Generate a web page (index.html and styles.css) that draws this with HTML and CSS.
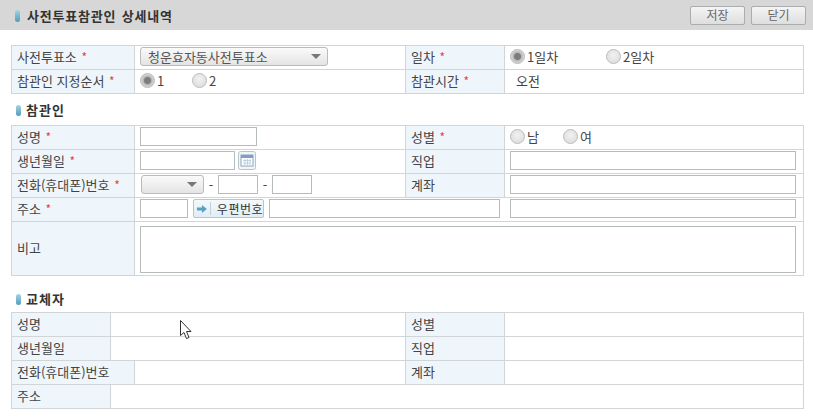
FILE: index.html
```html
<!DOCTYPE html>
<html lang="ko">
<head>
<meta charset="utf-8">
<title>사전투표참관인 상세내역</title>
<link rel="stylesheet" href="styles.css">
</head>
<body>
<header class="top">
  <h1 class="title"><span class="pill"></span>사전투표참관인 상세내역</h1>
  <div class="actions">
    <button class="btn" type="button">저장</button>
    <button class="btn" type="button">닫기</button>
  </div>
</header>

<table class="grid first">
  <colgroup><col class="c1"><col class="c2"><col class="c3"><col class="c4"><col class="c5"></colgroup>
  <tr>
    <th colspan="2">사전투표소 <em>*</em></th>
    <td><div class="ctl"><span class="select wide">청운효자동사전투표소<i class="arrow"></i></span></div></td>
    <th>일차 <em>*</em></th>
    <td><div class="ctl"><label class="opt day"><span class="radio on"></span>1일차</label><label class="opt"><span class="radio"></span>2일차</label></div></td>
  </tr>
  <tr>
    <th colspan="2">참관인 지정순서 <em>*</em></th>
    <td><div class="ctl"><label class="opt order"><span class="radio on"></span>1</label><label class="opt"><span class="radio"></span>2</label></div></td>
    <th>참관시간 <em>*</em></th>
    <td class="plain">오전</td>
  </tr>
</table>

<h2 class="section one"><span class="pill small"></span>참관인</h2>
<table class="grid">
  <colgroup><col class="c1"><col class="c2"><col class="c3"><col class="c4"><col class="c5"></colgroup>
  <tr>
    <th colspan="2">성명 <em>*</em></th>
    <td><div class="ctl"><span class="field name"></span></div></td>
    <th>성별 <em>*</em></th>
    <td><div class="ctl"><label class="opt male"><span class="radio"></span>남</label><label class="opt"><span class="radio"></span>여</label></div></td>
  </tr>
  <tr>
    <th colspan="2">생년월일 <em>*</em></th>
    <td><div class="ctl"><span class="field date"></span>
      <svg class="cal" width="18" height="19" viewBox="0 0 18 19"><rect x=".5" y=".5" width="17" height="18" rx="2" fill="#f2f5f8" stroke="#b9c3cc"/><rect x="3" y="4" width="12" height="11" fill="#fff" stroke="#8aa5c4"/><rect x="3" y="4" width="12" height="3" fill="#7f9fc6"/><path d="M5 9.500h8M5 12h8M7 8v6M9.500 8v6M12 8v6" stroke="#c3d0de"/></svg>
    </div></td>
    <th>직업</th>
    <td><div class="ctl"><span class="field full"></span></div></td>
  </tr>
  <tr>
    <th colspan="2">전화(휴대폰)번호 <em>*</em></th>
    <td><div class="ctl"><span class="select phone"><i class="arrow"></i></span><span class="dash">-</span><span class="field tel"></span><span class="dash">-</span><span class="field tel"></span></div></td>
    <th>계좌</th>
    <td><div class="ctl"><span class="field full"></span></div></td>
  </tr>
  <tr>
    <th colspan="2">주소 <em>*</em></th>
    <td colspan="3"><div class="ctl"><span class="field zip"></span>
      <button class="zipbtn" type="button"><svg width="12" height="10" viewBox="0 0 12 10"><path d="M1 3.500h5V1l5 4-5 4V6.500H1z" fill="#5c9fc4"/></svg><span class="sep"></span>우편번호</button>
      <span class="field addr"></span><span class="field full"></span></div></td>
  </tr>
  <tr class="tall">
    <th colspan="2">비고</th>
    <td colspan="3" class="notecell"><span class="field note"></span></td>
  </tr>
</table>

<h2 class="section two"><span class="pill small"></span>교체자</h2>
<table class="grid">
  <colgroup><col class="c1"><col class="c2"><col class="c3"><col class="c4"><col class="c5"></colgroup>
  <tr><th>성명</th><td colspan="2"></td><th>성별</th><td></td></tr>
  <tr><th>생년월일</th><td colspan="2"></td><th>직업</th><td></td></tr>
  <tr><th colspan="2">전화(휴대폰)번호</th><td></td><th>계좌</th><td></td></tr>
  <tr><th>주소</th><td colspan="4"></td></tr>
</table>

<svg class="cursor" width="13" height="20" viewBox="0 0 13 20"><path d="M.5.500v15l3.500-3 2.500 6 2.500-1-2.500-6h4.500z" fill="#fff" stroke="#333"/></svg>
</body>
</html>
```
FILE: styles.css
```css
* { box-sizing: border-box; }
html, body { margin: 0; padding: 0; }
body {
  position: relative;
  width: 813px;
  height: 420px;
  overflow: hidden;
  background: #fff;
  color: #444;
  font: 13px/18px "Noto Sans CJK KR", "Noto Sans", sans-serif;
}
.top {
  height: 30px;
  background: #d7d7d7;
  display: flex;
  align-items: center;
  justify-content: space-between;
  padding: 0 7px 0 15px;
}
.title, .section {
  margin: 0;
  display: flex;
  align-items: center;
  font-size: 13px;
  font-weight: 700;
  color: #333;
}
.title { letter-spacing: .8px; word-spacing: 1px; padding-top: 2px; }
.section { letter-spacing: 1px; }
.pill {
  display: block;
  width: 5px;
  height: 12px;
  margin-right: 7px;
  border-radius: 3px;
  background: linear-gradient(#a8d2e2, #4f9cc0);
}
.pill.small { margin-left: 1px; margin-right: 5px; width: 5px; height: 11px; }
.actions { display: flex; gap: 6px; }
.btn {
  width: 55px;
  height: 19px;
  padding: 0;
  border: 1px solid #a9adad;
  border-radius: 2px;
  background: linear-gradient(#f4f4f4, #dedede);
  color: #666;
  font: 12px/16px "Noto Sans CJK KR", sans-serif;
}
.grid {
  margin: 15px 0 0 11px;
  width: 792px;
  border-collapse: collapse;
  table-layout: fixed;
}
.c1 { width: 99px; }
.c2 { width: 24px; }
.c3 { width: 271px; }
.c4 { width: 99px; }
.c5 { width: 299px; }
.grid tr { height: 24px; }
.grid tr.tall { height: 54px; }
.grid th, .grid td {
  border: 1px solid #d2d5d7;
  padding: 0 0 2px 5px;
  font-weight: 400;
  text-align: left;
  white-space: nowrap;
  vertical-align: middle;
}
.grid th { background: #eff6fb; }
.grid em { color: #d9473f; font-style: normal; font-size: 12px; margin-left: 1px; }
.grid .plain { padding-left: 11px; }
.grid .notecell { padding: 4px 0 2px 5px; }
.ctl { display: flex; align-items: center; gap: 5px; height: 20px; }
.field {
  display: block;
  height: 19px;
  flex: none;
  border: 1px solid #b6bcbc;
  background: #fff;
}
.name { width: 117px; }
.date { width: 95px; }
.cal { flex: none; margin-left: -2px; }
.full { width: 286px; }
.tel { width: 40px; }
.zip { width: 48px; }
.addr { width: 231px; margin-right: 5px; }
.note { width: 656px; height: 47px; }
.select {
  position: relative;
  display: block;
  flex: none;
  height: 19px;
  padding-left: 7px;
  border: 1px solid #b8bcbc;
  border-radius: 3px;
  background: linear-gradient(#fafafa, #e4e4e4);
  color: #555;
  line-height: 17px;
}
.wide { width: 188px; }
.phone { width: 63px; margin-left: 1px; }
.arrow {
  position: absolute;
  right: 6px;
  top: 6px;
  border: 5px solid transparent;
  border-top: 5px solid #777;
  border-bottom: 0;
}
.dash { display: flex; justify-content: center; width: 4px; }
.opt { display: flex; align-items: center; gap: 2px; }
.radio {
  display: block;
  width: 15px;
  height: 15px;
  border: 1px solid #bdbdbd;
  border-radius: 50%;
  background: radial-gradient(circle at 50% 40%, #f2f2f2, #d8d8d8);
}
.radio.on { background: radial-gradient(circle, #7d7d7d 0 3px, #b5b5b5 4px, #d2d2d2 6px); }
.order { width: 47px; }
.day { width: 91px; }
.male { width: 48px; }
.zipbtn {
  display: flex;
  align-items: center;
  flex: none;
  width: 71px;
  height: 19px;
  padding: 0 0 0 2px;
  border: 1px solid #b5c6cf;
  border-radius: 2px;
  background: linear-gradient(#f3f9fc, #dfeef5);
  color: #333;
  font: 12px/16px "Noto Sans CJK KR", sans-serif;
  letter-spacing: .5px;
}
.sep { width: 1px; height: 13px; margin: 0 6px 0 2px; background: #c3d0d6; }
.section { height: 16px; }
.section.one { margin: 8px 0 -8px 15px; }
.section.two { margin: 15px 0 -10px 15px; }
.cursor { position: absolute; left: 180px; top: 320px; }
```
